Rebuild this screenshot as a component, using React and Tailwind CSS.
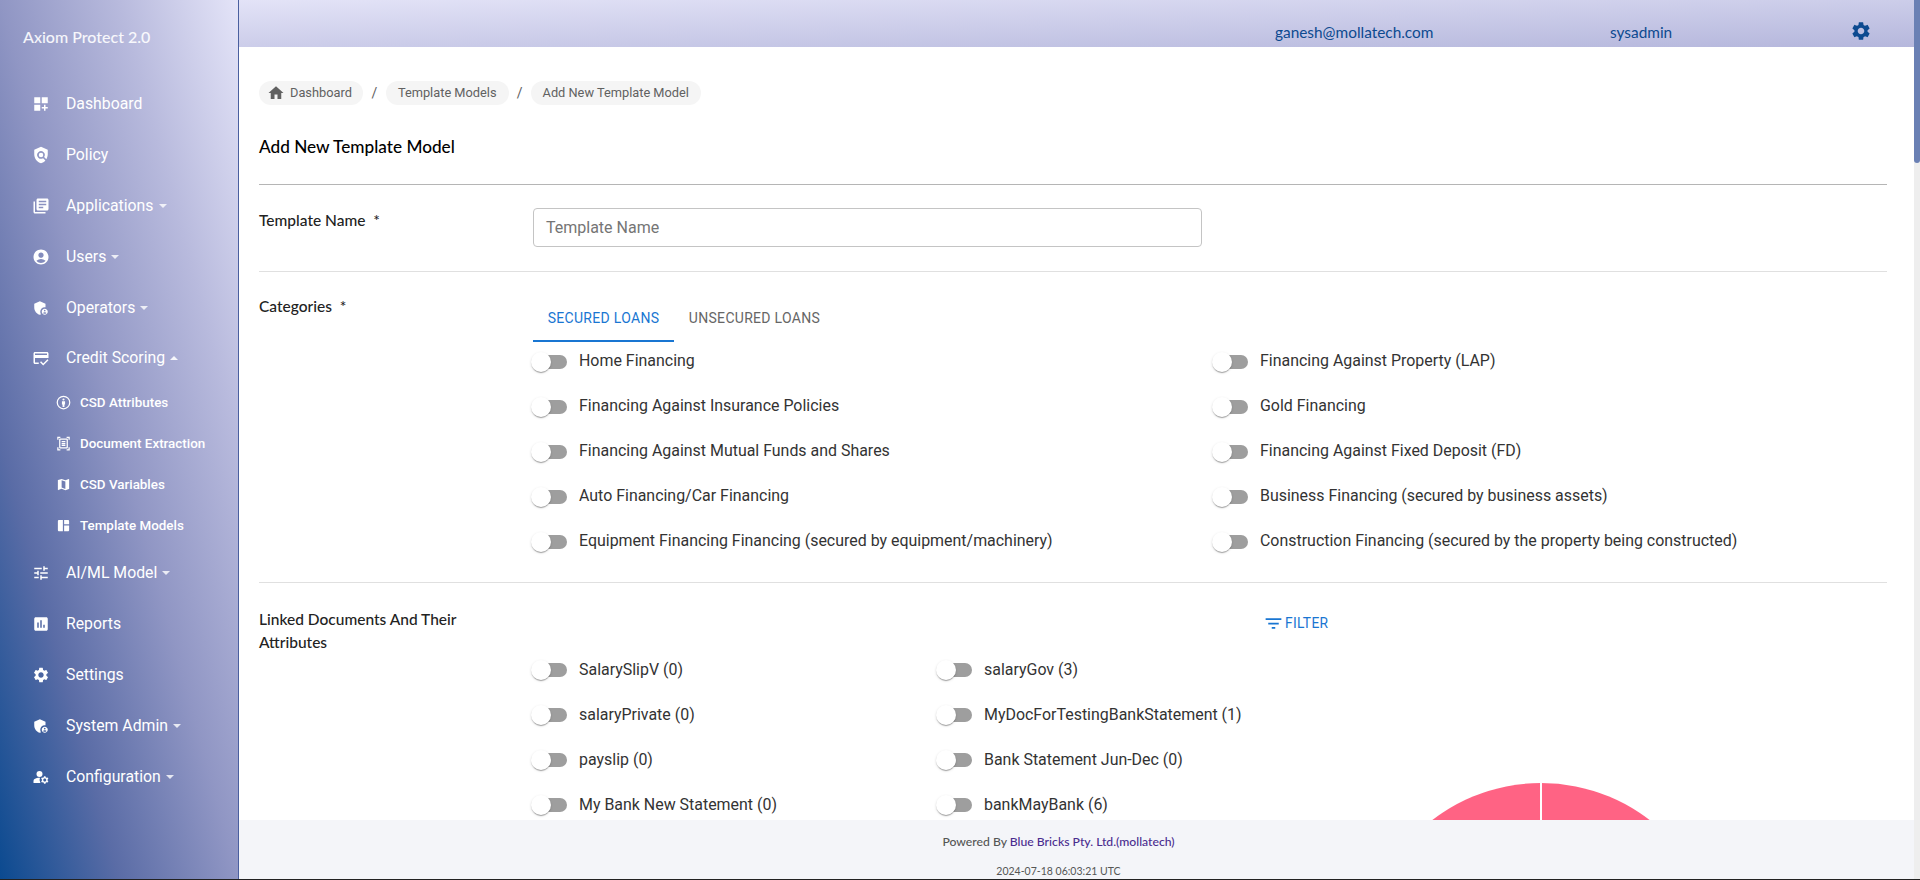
import React from "react";
import {
  MdDashboardCustomize, MdPolicy, MdLibraryBooks, MdAccountCircle, MdAdminPanelSettings, MdCreditScore,
  MdOutlineDocumentScanner, MdMap, MdSpaceDashboard, MdTune, MdAssessment, MdSettings,
  MdManageAccounts, MdHome, MdFilterList,
} from "react-icons/md";

const jost = "font-['Lato',sans-serif]";
const roboto = "font-['Roboto',sans-serif]";

function PersonCircle({ className }) {
  return (
    <svg className={className} viewBox="0 0 24 24" fill="currentColor">
      <circle cx="12" cy="12" r="10" fill="none" stroke="currentColor" strokeWidth="2" />
      <circle cx="12" cy="7.2" r="1.7" />
      <path d="M9.5 10h5v5h-1v4h-3v-4h-1z" />
    </svg>
  );
}

function Caret({ up }) {
  return up ? (
    <span className="ml-[5px] inline-block w-0 h-0 border-x-[4px] border-x-transparent border-b-[4px] border-b-white/90" />
  ) : (
    <span className="ml-[5px] inline-block w-0 h-0 border-x-[4px] border-x-transparent border-t-[4px] border-t-white/80" />
  );
}

function NavItem({ icon: Icon, label, caret, up, h = "h-[51px]" }) {
  return (
    <div className={`${h} flex items-center pl-[32px] text-white`}>
      <Icon className="w-[18px] h-[18px] shrink-0" />
      <span className="ml-[16px] text-[15.8px] leading-none">{label}</span>
      {caret && <Caret up={up} />}
    </div>
  );
}

function SubItem({ icon: Icon, label }) {
  return (
    <div className="h-[41px] pb-[2px] flex items-center pl-[56px] text-white">
      <Icon className="w-[15px] h-[15px] shrink-0" />
      <span className="ml-[9px] text-[13.4px] font-medium leading-none">{label}</span>
    </div>
  );
}

function Toggle({ label, lift }) {
  return (
    <div className="flex items-center h-[45px]">
      <span className="relative block ml-[1px] w-[33px] h-[14px] rounded-full bg-[#9e9e9e] shrink-0">
        <span className="absolute left-[-3px] top-[-3px] w-[20px] h-[20px] rounded-full bg-white shadow-[0_2px_1px_-1px_rgba(0,0,0,0.2),0_1px_1px_0_rgba(0,0,0,0.14),0_1px_3px_0_rgba(0,0,0,0.12)]" />
      </span>
      <span className={`ml-[12px] text-[15.95px] leading-none text-[#333] whitespace-nowrap ${lift ? "pb-[1px]" : ""}`}>{label}</span>
    </div>
  );
}

function Chip({ children, extra = "px-[12px]" }) {
  return (
    <span className={`h-[24px] ${extra} rounded-full bg-[#f5f5f5] flex items-center text-[12.8px] text-[#616161]`}>{children}</span>
  );
}

const cats = [
  "Home Financing", "Financing Against Property (LAP)",
  "Financing Against Insurance Policies", "Gold Financing",
  "Financing Against Mutual Funds and Shares", "Financing Against Fixed Deposit (FD)",
  "Auto Financing/Car Financing", "Business Financing (secured by business assets)",
  "Equipment Financing Financing (secured by equipment/machinery)", "Construction Financing (secured by the property being constructed)",
];
const docs = [
  "SalarySlipV (0)", "salaryGov (3)",
  "salaryPrivate (0)", "MyDocForTestingBankStatement (1)",
  "payslip (0)", "Bank Statement Jun-Dec (0)",
  "My Bank New Statement (0)", "bankMayBank (6)",
];

export default function App() {
  return (
    <div className={`w-[1920px] h-[880px] overflow-hidden flex flex-col bg-white ${roboto}`}>
      <div className="h-[879px] flex">
        <aside className="w-[239px] shrink-0 border-r border-r-[#4a5f9f] bg-[linear-gradient(to_top_right,#0b4a90_0%,#5a6ca6_25%,#9096c4_50%,#b8badd_75%,#e4e4f8_100%)]">
          <div className={`h-[78px] pt-[27px] pl-[23px] text-[16px] leading-[20px] font-medium text-white/90 ${jost}`}>Axiom Protect 2.0</div>
          <NavItem icon={MdDashboardCustomize} label="Dashboard" />
          <NavItem icon={MdPolicy} label="Policy" />
          <NavItem icon={MdLibraryBooks} label="Applications" caret />
          <NavItem icon={MdAccountCircle} label="Users" caret />
          <NavItem icon={MdAdminPanelSettings} label="Operators" caret />
          <NavItem icon={MdCreditScore} label="Credit Scoring" caret up h="h-[50px]" />
          <SubItem icon={PersonCircle} label="CSD Attributes" />
          <SubItem icon={MdOutlineDocumentScanner} label="Document Extraction" />
          <SubItem icon={MdMap} label="CSD Variables" />
          <SubItem icon={MdSpaceDashboard} label="Template Models" />
          <NavItem icon={MdTune} label="AI/ML Model" caret />
          <NavItem icon={MdAssessment} label="Reports" />
          <NavItem icon={MdSettings} label="Settings" />
          <NavItem icon={MdAdminPanelSettings} label="System Admin" caret />
          <NavItem icon={MdManageAccounts} label="Configuration" caret />
        </aside>

        <div className="flex-1 min-w-0 flex flex-col">
          <header className={`h-[47px] shrink-0 pt-[20px] flex items-start bg-[linear-gradient(178.4deg,#e3e3f7_0%,#b5b7dc_100%)] text-[15.4px] leading-[24px] text-[#0d4a90] ${jost}`}>
            <span className="ml-[1036px] w-[335px]">ganesh@mollatech.com</span>
            <span className="w-[240px]">sysadmin</span>
            <MdSettings className="w-[22px] h-[22px]" />
          </header>

          <main className="flex-1 min-h-0 overflow-hidden pl-[20px] pr-[27px]">
            <nav className="pt-[34px] flex items-center h-[58px]">
              <Chip extra="pl-[12px] pr-[11px]"><MdHome className="w-[18px] h-[18px] mr-[5px] ml-[-4px] text-[#616161]" />Dashboard</Chip>
              <span className="w-[23px] text-center text-[14px] text-[#616161]">/</span>
              <Chip>Template Models</Chip>
              <span className="w-[22px] text-center text-[14px] text-[#616161]">/</span>
              <Chip>Add New Template Model</Chip>
            </nav>
            <h1 className={`h-[80px] border-b border-b-[#b5b5b5] pt-[32px] text-[17.2px] leading-[20px] font-medium text-black ${jost}`}>Add New Template Model</h1>

            <section className="h-[87px] border-b border-b-[#e0e0e0] grid grid-cols-[274px_1fr]">
              <div className={`pt-[25px] text-[15.5px] leading-[20px] font-medium text-[#222] ${jost}`}>Template Name&nbsp; *</div>
              <div className="pt-[23px]">
                <div className="w-[669px] h-[39px] rounded-[4px] border border-[#c4c4c4] flex items-center pl-[12px] text-[16px] text-[#757575]">Template Name</div>
              </div>
            </section>

            <section className="h-[311px] border-b border-b-[#e0e0e0] grid grid-cols-[274px_1fr]">
              <div className={`pt-[24px] text-[15.5px] leading-[20px] font-medium text-[#222] ${jost}`}>Categories&nbsp; *</div>
              <div className="pt-[22px]">
                <div className="flex h-[48px] text-[14px] tracking-[0.3px]">
                  <div className="w-[141px] pt-[2px] flex items-center justify-center text-[#1976d2] border-b-2 border-b-[#1976d2]">SECURED LOANS</div>
                  <div className="w-[161px] pt-[1px] flex items-center justify-center text-[#666]">UNSECURED LOANS</div>
                </div>
                <div className="grid grid-cols-[681px_1fr] mt-[-3px]">
                  {cats.map((c) => <Toggle key={c} label={c} lift />)}
                </div>
              </div>
            </section>

            <section className="grid grid-cols-[274px_1fr]">
              <div className={`pt-[25px] text-[15.5px] leading-[23px] font-medium text-[#222] ${jost}`}>Linked Documents And Their<br />Attributes</div>
              <div className="flex">
                <div className="w-[810px] shrink-0">
                  <div className="h-[64px] pt-[29px] pl-[731px]">
                    <div className="flex items-center text-[13.8px] leading-[22px] text-[#1976d2] tracking-[0.3px]">
                      <MdFilterList className="w-[21px] h-[21px] mr-[1px] ml-[-1px]" />FILTER
                    </div>
                  </div>
                  <div className="grid grid-cols-[405px_1fr]">
                    {docs.map((d) => <Toggle key={d} label={d} />)}
                  </div>
                </div>
                <svg className="ml-[20px] mt-[200px] shrink-0" width="356" height="356" viewBox="0 0 356 356">
                  <circle cx="178" cy="178" r="178" fill="#ff6384" />
                  <line x1="178" y1="0" x2="178" y2="178" stroke="#ffffff" strokeWidth="2" />
                </svg>
              </div>
            </section>
          </main>

          <footer className={`h-[59px] shrink-0 bg-[#f4f5f9] pr-[36px] text-center ${jost}`}>
            <div className="pt-[14px] text-[12.2px] leading-[16px] font-medium text-[#555]">Powered By <span className="text-[#4a2c8f]">Blue Bricks Pty. Ltd.(mollatech)</span></div>
            <div className="pt-[14px] text-[10.5px] leading-[14px] text-[#555]">2024-07-18 06:03:21 UTC</div>
          </footer>
        </div>

        <div className="w-[6px] shrink-0 bg-[#eeeeee]">
          <div className="h-[163px] bg-[#6a80b4] rounded-b-[3px]" />
        </div>
      </div>
      <div className="h-[1px] bg-[#222]" />
    </div>
  );
}
